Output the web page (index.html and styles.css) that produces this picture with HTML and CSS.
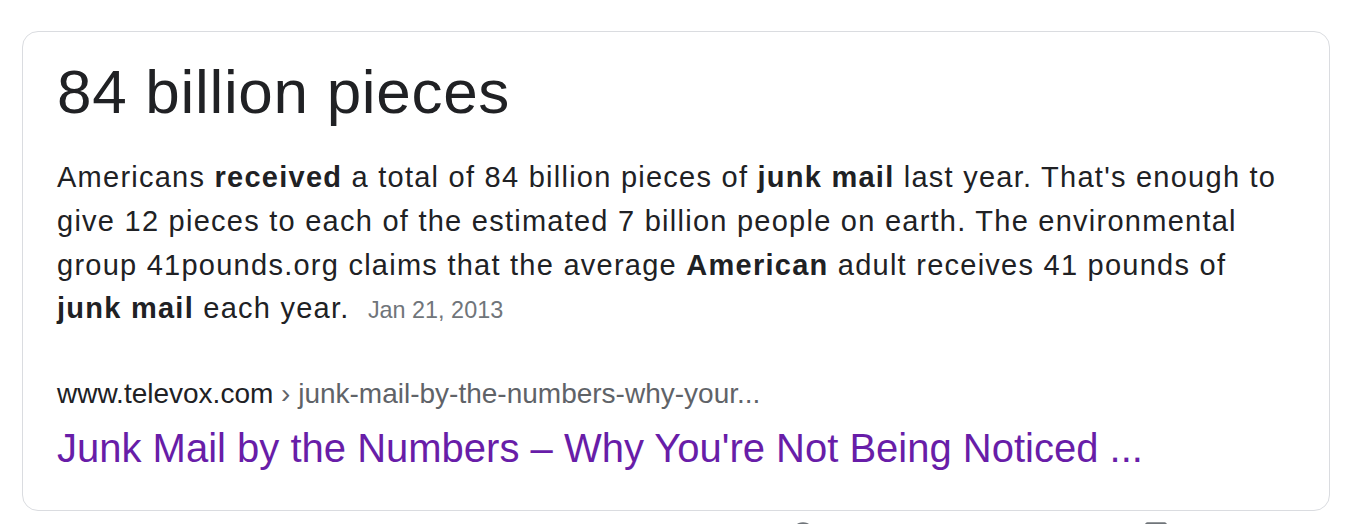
FILE: index.html
```html
<!DOCTYPE html>
<html lang="en">
<head>
<meta charset="utf-8">
<title>Featured snippet</title>
<link rel="stylesheet" href="styles.css">
</head>
<body>
<div class="page">
  <div class="card">
    <div class="answer">84 billion pieces</div>
    <div class="snippet">Americans <b>received</b> a total of 84 billion pieces of <b>junk mail</b> last year. That's enough to give 12 pieces to each of the estimated 7 billion people on earth. The environmental group 41pounds.org claims that the average <b>American</b> adult receives 41 pounds of <b>junk mail</b> each year. <span class="date">Jan 21, 2013</span></div>
    <div class="cite"><span class="host">www.televox.com</span> › junk-mail-by-the-numbers-why-your...</div>
    <a class="result-title" href="#">Junk Mail by the Numbers – Why You're Not Being Noticed ...</a>
  </div>
  <div class="footer">
    <div class="foot-item">
      <svg class="foot-icon" width="24" height="24" viewBox="0 0 24 24"><path fill="#70757a" d="M12 2C6.48 2 2 6.48 2 12s4.48 10 10 10 10-4.48 10-10S17.52 2 12 2zm1 17h-2v-2h2v2zm2.07-7.75l-.9.92C13.45 12.9 13 13.5 13 15h-2v-.5c0-1.1.45-2.1 1.17-2.83l1.24-1.26c.37-.36.59-.86.59-1.41 0-1.1-.9-2-2-2s-2 .9-2 2H8c0-2.21 1.79-4 4-4s4 1.79 4 4c0 .88-.36 1.68-.93 2.25z"/></svg>
      <span class="foot-label">About Featured Snippets</span>
    </div>
    <div class="foot-item">
      <svg class="foot-icon" width="24" height="24" viewBox="0 0 24 24"><path fill="#70757a" d="M20 2H4c-1.1 0-2 .9-2 2v18l4-4h14c1.1 0 2-.9 2-2V4c0-1.1-.9-2-2-2zm-7 12h-2v-2h2v2zm0-4h-2V6h2v4z"/></svg>
      <span class="foot-label">Feedback</span>
    </div>
  </div>
</div>
</body>
</html>
```

FILE: styles.css
```css
html, body {
  margin: 0;
  padding: 0;
  background: #ffffff;
}

body {
  font-family: "Liberation Sans", Arial, sans-serif;
  color: #202124;
  overflow: hidden;
}

.page {
  padding: 31px 20px 0 22px;
}

.card {
  width: 1308px;
  box-sizing: border-box;
  border: 1px solid #dadce0;
  border-radius: 16px;
  padding: 24px 34px 38px 34px;
  display: flex;
  flex-direction: column;
  align-items: flex-start;
}

.answer {
  font-size: 62px;
  letter-spacing: 0.7px;
  line-height: 72px;
  color: #202124;
}

.snippet {
  margin-top: 28px;
  font-size: 29px;
  letter-spacing: 1.25px;
  line-height: 43.75px;
  color: #202124;
}

.snippet b {
  font-weight: bold;
}

.date {
  font-size: 23.4px;
  letter-spacing: 0;
  color: #70757a;
  margin-left: 9px;
}

.cite {
  margin-top: 43px;
  font-size: 28px;
  line-height: 36px;
  color: #5f6368;
}

.host {
  color: #202124;
}

.result-title {
  margin-top: 12px;
  font-size: 40px;
  line-height: 48px;
  color: #681da8;
  text-decoration: none;
}

.footer {
  display: flex;
  justify-content: flex-end;
  gap: 46px;
  padding-top: 9px;
  padding-right: 43px;
  width: 1308px;
  box-sizing: border-box;
  font-size: 24.5px;
  color: #70757a;
}

.foot-item {
  display: flex;
  align-items: flex-start;
  gap: 10px;
}

.foot-icon {
  width: 26px;
  height: 26px;
  flex: none;
}

.foot-label {
  padding-top: 8px;
}
```
